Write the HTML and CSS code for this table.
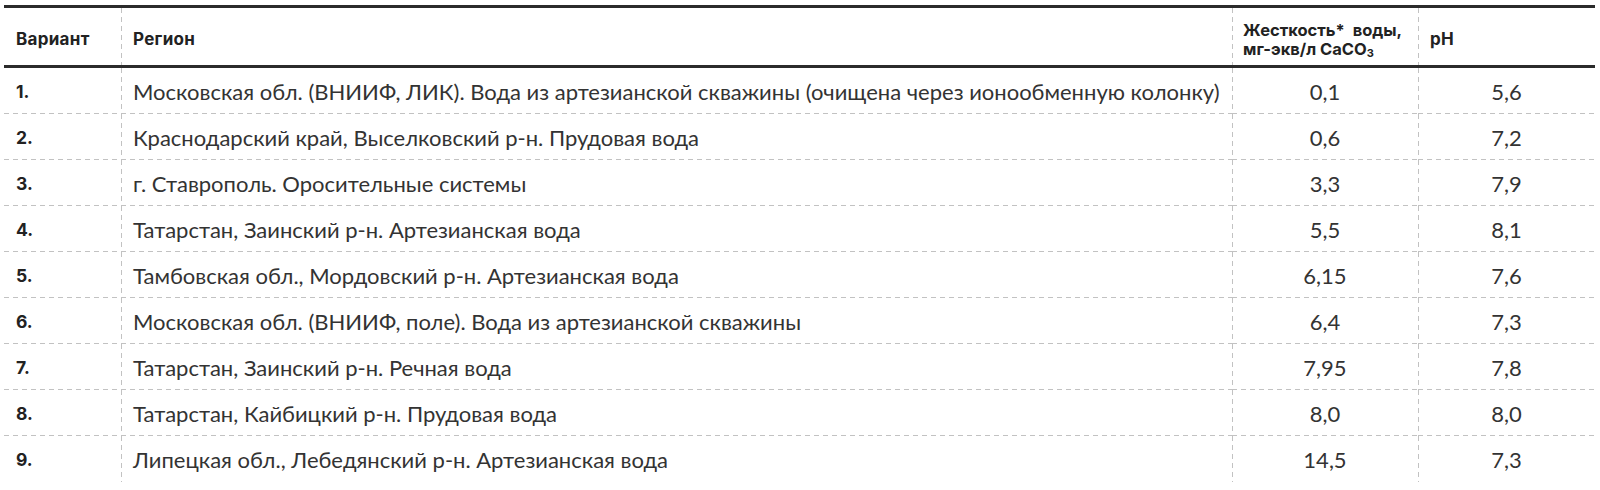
FILE: index.html
```html
<!DOCTYPE html>
<html lang="ru">
<head>
<meta charset="utf-8">
<title>Жесткость воды</title>
<link rel="stylesheet" href="styles.css">
</head>
<body>
<table class="data">
  <colgroup>
    <col class="c-var">
    <col class="c-reg">
    <col class="c-hard">
    <col class="c-ph">
  </colgroup>
  <thead>
    <tr>
      <th>Вариант</th>
      <th>Регион</th>
      <th class="hard">Жесткость*&nbsp; воды,<br>мг-экв/л CaCO<sub>3</sub></th>
      <th>pH</th>
    </tr>
  </thead>
  <tbody>
    <tr><td class="num">1.</td><td>Московская обл. (ВНИИФ, ЛИК). Вода из артезианской скважины (очищена через ионообменную колонку)</td><td class="val">0,1</td><td class="val">5,6</td></tr>
    <tr><td class="num">2.</td><td>Краснодарский край, Выселковский р-н. Прудовая вода</td><td class="val">0,6</td><td class="val">7,2</td></tr>
    <tr><td class="num">3.</td><td>г. Ставрополь. Оросительные системы</td><td class="val">3,3</td><td class="val">7,9</td></tr>
    <tr><td class="num">4.</td><td>Татарстан, Заинский р-н. Артезианская вода</td><td class="val">5,5</td><td class="val">8,1</td></tr>
    <tr><td class="num">5.</td><td>Тамбовская обл., Мордовский р-н. Артезианская вода</td><td class="val">6,15</td><td class="val">7,6</td></tr>
    <tr><td class="num">6.</td><td>Московская обл. (ВНИИФ, поле). Вода из артезианской скважины</td><td class="val">6,4</td><td class="val">7,3</td></tr>
    <tr><td class="num">7.</td><td>Татарстан, Заинский р-н. Речная вода</td><td class="val">7,95</td><td class="val">7,8</td></tr>
    <tr><td class="num">8.</td><td>Татарстан, Кайбицкий р-н. Прудовая вода</td><td class="val">8,0</td><td class="val">8,0</td></tr>
    <tr><td class="num">9.</td><td>Липецкая обл., Лебедянский р-н. Артезианская вода</td><td class="val">14,5</td><td class="val">7,3</td></tr>
  </tbody>
</table>
</body>
</html>
```
FILE: styles.css
```css
html, body {
  margin: 0;
  padding: 0;
  background: #ffffff;
}

body {
  font-family: Lato, "Open Sans", "Liberation Sans", sans-serif;
  color: #333333;
}

.data {
  margin: 5px 0 0 4px;
  width: 1591px;
  table-layout: fixed;
  border-collapse: separate;
  border-spacing: 0;
  border-top: 3px solid #2b2b2b;
}

.c-var { width: 117px; }
.c-reg { width: 1111px; }
.c-hard { width: 186px; }
.c-ph { width: 177px; }

.data th {
  height: 60px;
  padding: 6px 4px 0 12px;
  box-sizing: border-box;
  text-align: left;
  vertical-align: middle;
  white-space: nowrap;
  font-family: Inter, "Open Sans", "Liberation Sans", sans-serif;
  font-size: 17px;
  line-height: 18.5px;
  font-weight: 700;
  letter-spacing: 0.3px;
  color: #222222;
  border-bottom: 3px solid #2b2b2b;
}

.data th.hard {
  font-size: 16.5px;
  letter-spacing: 0;
  padding-left: 11px;
}

.data th sub {
  font-size: 11px;
  vertical-align: -2px;
  line-height: 0;
}

.data td {
  height: 46px;
  padding: 1px 12px 0 12px;
  box-sizing: border-box;
  vertical-align: middle;
  font-size: 22px;
  line-height: 26px;
  color: #333333;
  background-image: linear-gradient(to right, #c2c2c2 0 5px, transparent 5px 9px);
  background-size: 9px 1px;
  background-repeat: repeat-x;
  background-position: left bottom;
}

.data tbody tr:last-child td {
  background-image: none;
}

.data th + th,
.data td + td {
  position: relative;
}

.data th + th::before,
.data td + td::before {
  content: "";
  position: absolute;
  left: 0;
  top: 0;
  bottom: 0;
  width: 1px;
  background-image: linear-gradient(to bottom, #c2c2c2 0 5px, transparent 5px 9px);
  background-size: 1px 9px;
  background-repeat: repeat-y;
}

.data td.num {
  font-family: Inter, "Open Sans", "Liberation Sans", sans-serif;
  font-weight: 700;
  font-size: 17.5px;
  color: #222222;
}

.data td.val {
  text-align: center;
}
```
